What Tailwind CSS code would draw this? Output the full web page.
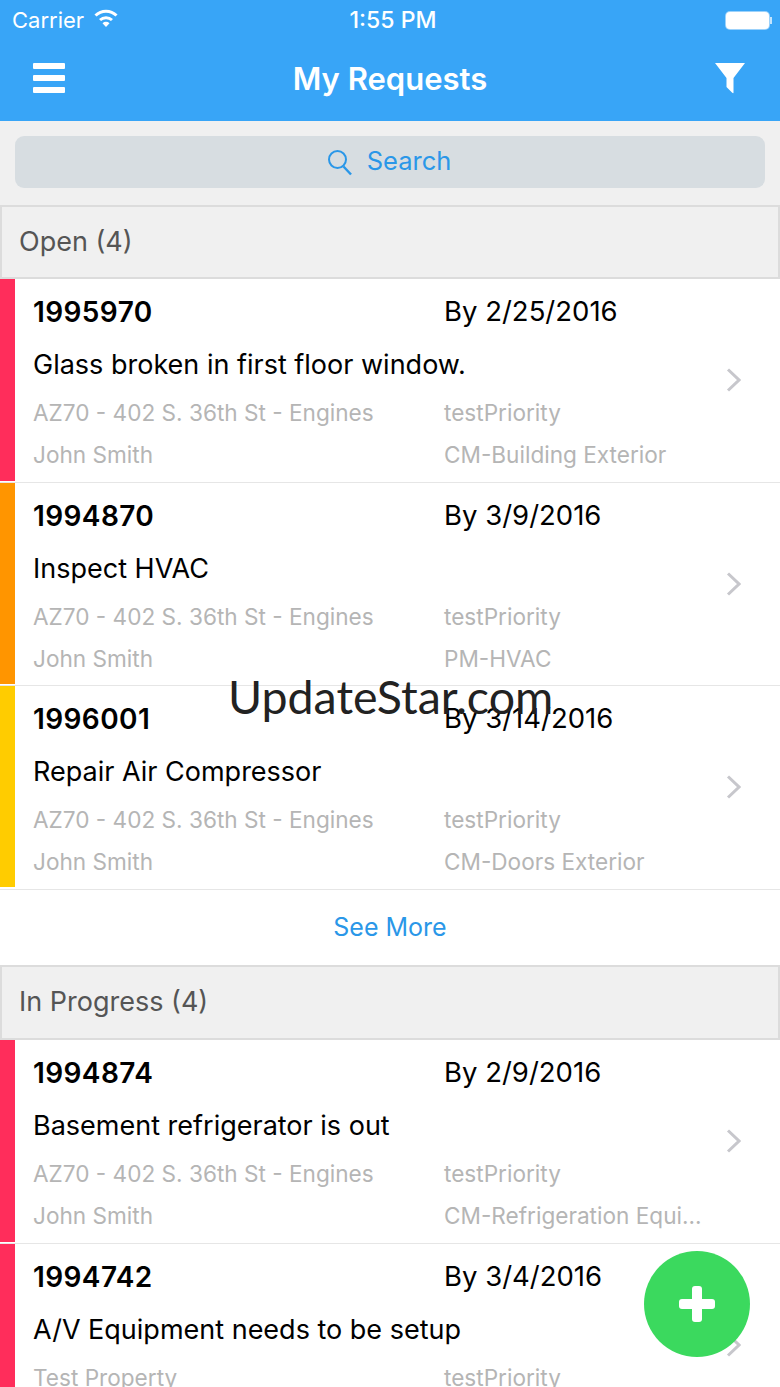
<!DOCTYPE html>
<html lang="en">
<head>
    <meta charset="utf-8" />
    <meta content="width=device-width, initial-scale=1.0" name="viewport" />
    <title>My Requests</title>
    <script src="https://cdn.jsdelivr.net/npm/@tailwindcss/browser@4"></script>
</head>
<body class="bg-white font-['Inter',sans-serif]">
<div class="relative w-[780px] h-[1387px] overflow-hidden bg-white">

    <!-- Header -->
    <header class="h-[121px] bg-[#38a5f7] text-white">
        <div class="h-10 pl-3 pr-[8px] flex items-center justify-between relative">
            <div class="flex items-center gap-[10px] text-[22px] font-normal">
                <span>Carrier</span>
                <svg width="24" height="18" viewBox="0 0 24 18" fill="none" stroke="white" stroke-width="3" class="-mt-1"><path d="M1.500 6.500a15 15 0 0 1 21 0"/><path d="M6 11a9 9 0 0 1 12 0"/><path d="M12 18l-3.500-3.800a5 5 0 0 1 7 0z" fill="white" stroke="none"/></svg>
            </div>
            <span class="absolute left-0 right-0 pl-[6px] text-center text-[23px] font-medium">1:55 PM</span>
            <div class="flex items-center">
                <div class="w-[43px] h-[17px] bg-white rounded-[4px] shadow-[0_0_0_1px_rgba(255,255,255,0.5)]"></div>
                <div class="w-[2px] h-[7px] bg-white/70 ml-[1px]"></div>
            </div>
        </div>
        <div class="h-[81px] pl-[33px] pr-[35px] flex items-center justify-between relative">
            <div class="w-[32px] flex flex-col gap-[6px] -mt-[6px]">
                <div class="h-[6px] bg-white rounded-[1px]"></div>
                <div class="h-[6px] bg-white rounded-[1px]"></div>
                <div class="h-[6px] bg-white rounded-[1px]"></div>
            </div>
            <h1 class="absolute left-0 right-0 text-center text-[31px] font-semibold -mt-[2px]">My Requests</h1>
            <svg width="30" height="31" viewBox="0 0 30 31" class="-mt-[5px]"><path d="M0 0h30L18.500 15v14.500q0 1.500-1.500 0L11.500 24V15z" fill="white"/></svg>
        </div>
    </header>

    <!-- Search -->
    <div class="h-[84px] bg-[#f0f0f0] px-[15px] pt-[15px]">
        <div class="h-[52px] bg-[#d7dde1] rounded-[9px] flex items-center justify-center gap-[14px] text-[#2a97e8] text-[25.500px]">
            <svg width="26" height="27" viewBox="0 0 26 27" fill="none" stroke="#2a97e8" stroke-width="2" class="-ml-[2px]"><circle cx="10.500" cy="10.500" r="8.500"/><path d="M16.500 17.500l7.500 8" stroke-width="2.500"/></svg>
            <span class="-mt-[2px]">Search</span>
        </div>
    </div>

    <!-- Open -->
    <div class="h-[74px] bg-[#f0f0f0] border-2 border-[#dcdcdc] pl-[17px] flex items-center text-[#555555] text-[27px]">Open (4)</div>

    <div class="flex items-stretch h-[204px] border-b border-[#e6e6e6]">
        <div class="w-[15px] h-[202px] bg-[#ff2d5b] shrink-0"></div>
        <div class="flex-1 pl-[18px] grid grid-cols-[411px_1fr] grid-rows-[66px_40px_56px_28px] items-center relative">
            <div class="text-[28px] tracking-[0.4px] font-semibold text-black">1995970</div><div class="text-[27.500px] text-black">By 2/25/2016</div>
            <div class="col-span-2 text-[27px] text-black">Glass broken in first floor window.</div>
            <div class="text-[22.600px] text-[#b5b5b5]">AZ70 - 402 S. 36th St - Engines</div><div class="text-[22.600px] text-[#b5b5b5]">testPriority</div>
            <div class="text-[22.600px] text-[#b5b5b5]">John Smith</div><div class="text-[22.600px] text-[#b5b5b5]">CM-Building Exterior</div>
            <svg class="absolute right-[39px] top-[89px]" width="15" height="24" viewBox="0 0 15 24" fill="none" stroke="#c7c7cc" stroke-width="3"><path d="M2 1.500l11 10.500L2 22.500"/></svg>
        </div>
    </div>

    <div class="flex items-stretch h-[203px] border-b border-[#e6e6e6]">
        <div class="w-[15px] h-[201px] bg-[#ff9500] shrink-0"></div>
        <div class="flex-1 pl-[18px] grid grid-cols-[411px_1fr] grid-rows-[66px_40px_56px_28px] items-center relative">
            <div class="text-[28px] tracking-[0.4px] font-semibold text-black">1994870</div><div class="text-[27.500px] text-black">By 3/9/2016</div>
            <div class="col-span-2 text-[27px] text-black">Inspect HVAC</div>
            <div class="text-[22.600px] text-[#b5b5b5]">AZ70 - 402 S. 36th St - Engines</div><div class="text-[22.600px] text-[#b5b5b5]">testPriority</div>
            <div class="text-[22.600px] text-[#b5b5b5]">John Smith</div><div class="text-[22.600px] text-[#b5b5b5]">PM-HVAC</div>
            <svg class="absolute right-[39px] top-[89px]" width="15" height="24" viewBox="0 0 15 24" fill="none" stroke="#c7c7cc" stroke-width="3"><path d="M2 1.500l11 10.500L2 22.500"/></svg>
        </div>
    </div>

    <div class="flex items-stretch h-[204px] border-b border-[#e6e6e6]">
        <div class="w-[15px] h-[201px] bg-[#ffcc00] shrink-0"></div>
        <div class="flex-1 pl-[18px] grid grid-cols-[411px_1fr] grid-rows-[66px_40px_56px_28px] items-center relative">
            <div class="text-[28px] tracking-[0.4px] font-semibold text-black">1996001</div><div class="text-[27.500px] text-black">By 3/14/2016</div>
            <div class="col-span-2 text-[27px] text-black">Repair Air Compressor</div>
            <div class="text-[22.600px] text-[#b5b5b5]">AZ70 - 402 S. 36th St - Engines</div><div class="text-[22.600px] text-[#b5b5b5]">testPriority</div>
            <div class="text-[22.600px] text-[#b5b5b5]">John Smith</div><div class="text-[22.600px] text-[#b5b5b5]">CM-Doors Exterior</div>
            <svg class="absolute right-[39px] top-[89px]" width="15" height="24" viewBox="0 0 15 24" fill="none" stroke="#c7c7cc" stroke-width="3"><path d="M2 1.500l11 10.500L2 22.500"/></svg>
        </div>
    </div>

    <div class="h-[75px] flex items-center justify-center text-[#2a97e8] text-[25px]">See More</div>

    <!-- In Progress -->
    <div class="h-[75px] bg-[#f0f0f0] border-2 border-[#dcdcdc] pl-[17px] flex items-center text-[#555555] text-[27px]">In Progress (4)</div>

    <div class="flex items-stretch h-[204px] border-b border-[#e6e6e6]">
        <div class="w-[15px] h-[202px] bg-[#ff2d5b] shrink-0"></div>
        <div class="flex-1 pl-[18px] grid grid-cols-[411px_1fr] grid-rows-[66px_40px_56px_28px] items-center relative">
            <div class="text-[28px] tracking-[0.4px] font-semibold text-black">1994874</div><div class="text-[27.500px] text-black">By 2/9/2016</div>
            <div class="col-span-2 text-[27px] text-black">Basement refrigerator is out</div>
            <div class="text-[22.600px] text-[#b5b5b5]">AZ70 - 402 S. 36th St - Engines</div><div class="text-[22.600px] text-[#b5b5b5]">testPriority</div>
            <div class="text-[22.600px] text-[#b5b5b5]">John Smith</div><div class="text-[22.600px] text-[#b5b5b5]">CM-Refrigeration Equi...</div>
            <svg class="absolute right-[39px] top-[89px]" width="15" height="24" viewBox="0 0 15 24" fill="none" stroke="#c7c7cc" stroke-width="3"><path d="M2 1.500l11 10.500L2 22.500"/></svg>
        </div>
    </div>

    <div class="flex items-stretch h-[203px]">
        <div class="w-[15px] h-[202px] bg-[#ff2d5b] shrink-0"></div>
        <div class="flex-1 pl-[18px] grid grid-cols-[411px_1fr] grid-rows-[66px_40px_56px_28px] items-center relative">
            <div class="text-[28px] tracking-[0.4px] font-semibold text-black">1994742</div><div class="text-[27.500px] text-black">By 3/4/2016</div>
            <div class="col-span-2 text-[27px] text-black">A/V Equipment needs to be setup</div>
            <div class="text-[22.600px] text-[#b5b5b5]">Test Property</div><div class="text-[22.600px] text-[#b5b5b5]">testPriority</div>
            <svg class="absolute right-[39px] top-[89px]" width="15" height="24" viewBox="0 0 15 24" fill="none" stroke="#c7c7cc" stroke-width="3"><path d="M2 1.500l11 10.500L2 22.500"/></svg>
        </div>
    </div>

    <!-- Watermark -->
    <div class="absolute left-[228px] top-[667px] text-[46.500px] leading-[58px] text-[#222222] font-['Lato',sans-serif]">UpdateStar.com</div>

    <!-- Add button -->
    <div class="absolute left-[644px] top-[1251px] w-[106px] h-[106px] rounded-full bg-[#3bd95e] flex items-center justify-center">
        <svg width="36" height="36" viewBox="0 0 36 36" fill="white"><rect x="13" width="10" height="36" rx="3"/><rect y="13" width="36" height="10" rx="3"/></svg>
    </div>
</div>
</body>
</html>
